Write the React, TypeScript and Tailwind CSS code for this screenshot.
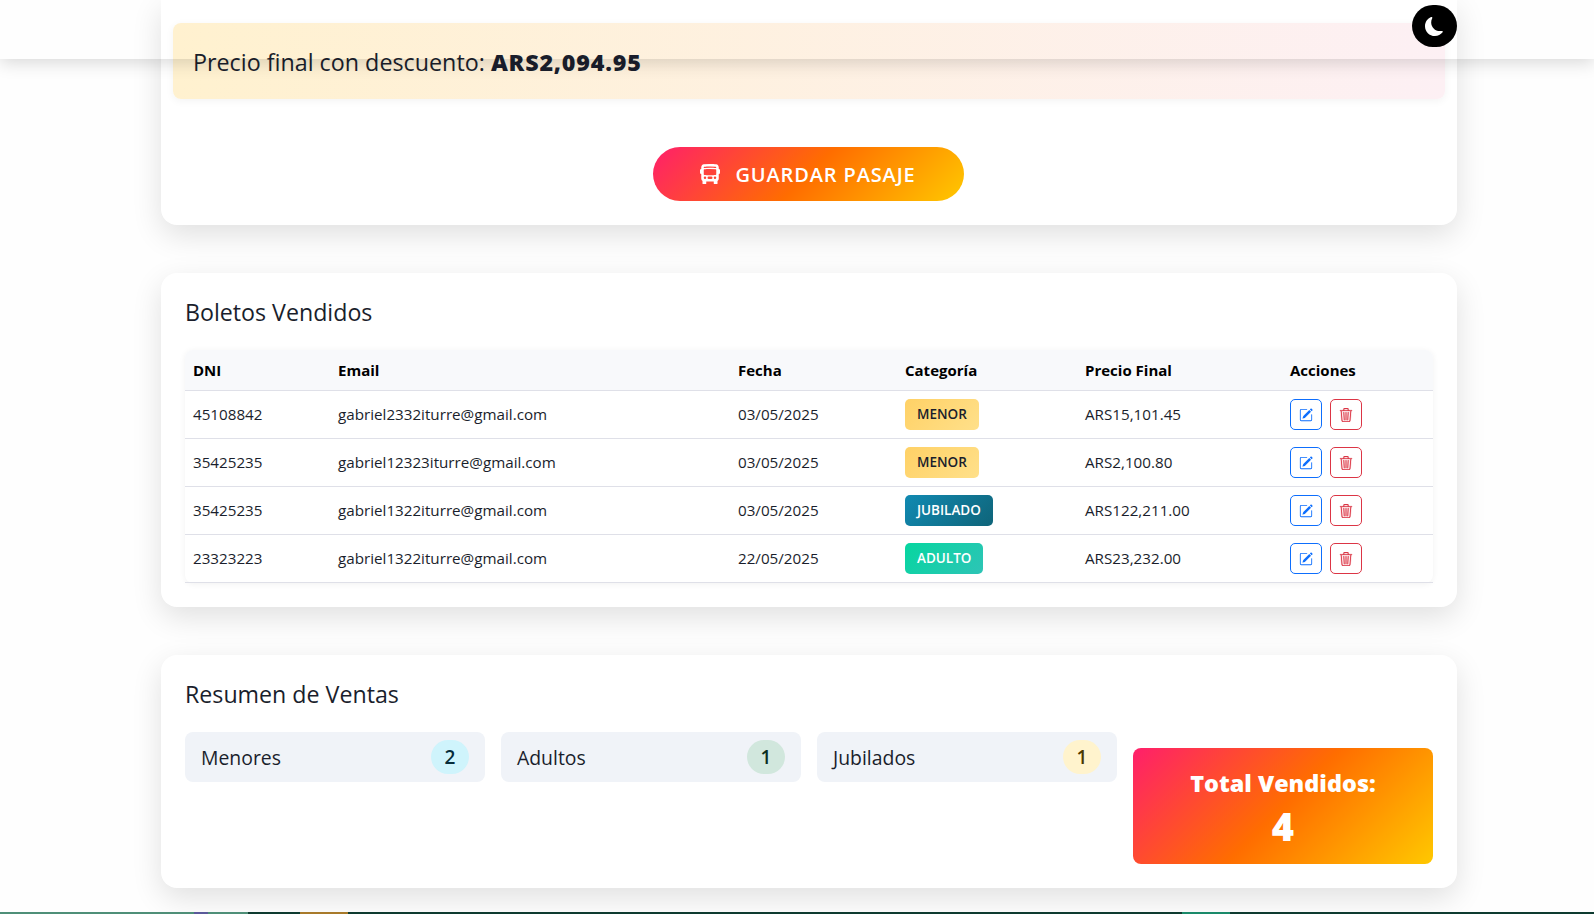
import React from 'react';
import { BsBusFrontFill, BsMoonFill, BsPencilSquare, BsTrash3 } from 'react-icons/bs';

const sans = "font-['Open_Sans','Noto_Sans',sans-serif]";

interface Ticket {
  dni: string;
  email: string;
  fecha: string;
  cat: 'MENOR' | 'JUBILADO' | 'ADULTO';
  precio: string;
}

const tickets: Ticket[] = [
  { dni: '45108842', email: 'gabriel2332iturre@gmail.com', fecha: '03/05/2025', cat: 'MENOR', precio: 'ARS15,101.45' },
  { dni: '35425235', email: 'gabriel12323iturre@gmail.com', fecha: '03/05/2025', cat: 'MENOR', precio: 'ARS2,100.80' },
  { dni: '35425235', email: 'gabriel1322iturre@gmail.com', fecha: '03/05/2025', cat: 'JUBILADO', precio: 'ARS122,211.00' },
  { dni: '23323223', email: 'gabriel1322iturre@gmail.com', fecha: '22/05/2025', cat: 'ADULTO', precio: 'ARS23,232.00' },
];

const badgeClass = {
  MENOR: 'bg-[linear-gradient(135deg,#ffd166,#ffe08a)] text-[#1a1e2c]',
  JUBILADO: 'bg-[linear-gradient(135deg,#118ab2,#0f6479)] text-white',
  ADULTO: 'bg-[linear-gradient(135deg,#06d6a0,#2ec4b6)] text-white',
};

const cols = 'grid grid-cols-[145px_400px_167px_180px_205px_1fr]';

const SummaryItem = ({ label, count, badge }: { label: string; count: number; badge: string }) => (
  <div className="h-[50px] bg-[#f0f3f8] rounded-[8px] flex items-center justify-between px-[16px]">
    <span className="text-[19.4px] pt-[1px] text-[#1a1e2c]">{label}</span>
    <span className={`w-[38px] h-[34px] rounded-full flex items-center justify-center text-[19px] font-semibold ${badge}`}>{count}</span>
  </div>
);

export default function App() {
  return (
    <div className={`relative h-[914px] overflow-hidden bg-[#fefefe] flex flex-col ${sans}`}>
      {/* barra fija de arriba */}
      <div className="absolute top-0 left-0 right-0 h-[59px] shadow-[0_4px_16px_rgba(0,0,0,0.15)] z-10" />
      <button className="absolute z-20 top-[5px] left-[1412px] w-[45px] h-[42px] rounded-full bg-black flex items-center justify-center">
        <BsMoonFill size={19} className="text-white" />
      </button>

      <main className="flex flex-col gap-[48px] ml-[161px] w-[1296px]">
        <section className="h-[225px] bg-white rounded-b-[16px] shadow-[0_10px_30px_rgba(0,0,0,0.12)] pt-[23px] px-[12px]">
          <div className="h-[76px] rounded-[8px] bg-gradient-to-r from-[#fff1cf] to-[#fdf0f4] shadow-[0_2px_8px_rgba(0,0,0,0.05)] flex items-center pl-[20px] pt-[2px] text-[23.3px] text-[#1a1e2c]">
            <span>Precio final con descuento:&nbsp;</span>
            <strong className="font-extrabold tracking-[0.8px]">ARS2,094.95</strong>
          </div>
          <div className="flex justify-center mt-[48px]">
            <button className="-ml-[2px] w-[311px] h-[54px] pt-[2px] rounded-full bg-[linear-gradient(135deg,#ff1f6b,#ff6d00_50%,#ffc800)] text-white flex items-center justify-center gap-[15px] text-[20px] font-semibold tracking-[0.85px]">
              <BsBusFrontFill size={20} className="-mt-[2px]" />
              GUARDAR PASAJE
            </button>
          </div>
        </section>

        <section className="h-[334px] bg-white rounded-[16px] shadow-[0_10px_30px_rgba(0,0,0,0.12)] px-[24px] pt-[23px]">
          <h2 className="text-[23.2px] leading-[32px] text-[#1a1e2c] font-medium">Boletos Vendidos</h2>
          <div className="mt-[22px] rounded-[8px] shadow-[0_1px_6px_rgba(0,0,0,0.06)] text-[15.2px] text-[#1a1e2c]">
            <div className={`${cols} h-[41px] items-center bg-[#f8f9fb] rounded-t-[8px] border-b border-[#dfe0e8] px-[8px] text-[15px] font-bold text-black`}>
              <span>DNI</span>
              <span>Email</span>
              <span>Fecha</span>
              <span>Categoría</span>
              <span>Precio Final</span>
              <span>Acciones</span>
            </div>
            {tickets.map((t, i) => (
              <div key={i} className={`${cols} h-[48px] items-center border-b border-[#dfe0e8] px-[8px]`}>
                <span>{t.dni}</span>
                <span>{t.email}</span>
                <span>{t.fecha}</span>
                <span>
                  <span className={`inline-flex items-center h-[31px] px-[12px] rounded-[5px] text-[13.5px] font-semibold ${badgeClass[t.cat]}`}>{t.cat}</span>
                </span>
                <span>{t.precio}</span>
                <span className="flex gap-[8px]">
                  <button className="w-[31.5px] h-[31px] rounded-[5px] border border-[#0d6efd] flex items-center justify-center text-[#0d6efd]"><BsPencilSquare size={14} /></button>
                  <button className="w-[32px] h-[31px] rounded-[5px] border border-[#dc3545] flex items-center justify-center text-[#dc3545]"><BsTrash3 size={14} stroke="currentColor" strokeWidth={0.3} /></button>
                </span>
              </div>
            ))}
          </div>
        </section>

        <section className="h-[233px] bg-white rounded-[16px] shadow-[0_10px_30px_rgba(0,0,0,0.12)] px-[24px] pt-[23px]">
          <h2 className="text-[23.2px] leading-[32px] text-[#1a1e2c] font-medium">Resumen de Ventas</h2>
          <div className="grid grid-cols-4 gap-[16px] mt-[22px] items-start">
            <SummaryItem label="Menores" count={2} badge="bg-[#cff4fc] text-[#052c3b]" />
            <SummaryItem label="Adultos" count={1} badge="bg-[#d1e7dd] text-[#0a2e1f]" />
            <SummaryItem label="Jubilados" count={1} badge="bg-[#fff3cd] text-[#4d3800]" />
            <div className="mt-[16px] h-[116px] pt-[5px] rounded-[8px] bg-[linear-gradient(135deg,#ff1f6b,#ff6d00_50%,#ffc800)] text-white flex flex-col items-center justify-center">
              <span className="text-[23.4px] font-extrabold">Total Vendidos:</span>
              <span className="text-[38px] leading-[50px] font-extrabold">4</span>
            </div>
          </div>
        </section>
      </main>

      {/* tira del fondo */}
      <div className="absolute bottom-0 left-0 right-0 h-[2px] flex bg-[#0e3b30]">
        <div className="w-[194px] bg-[#4f8f78]" />
        <div className="w-[14px] bg-[#5a5a9a]" />
        <div className="w-[40px] bg-[#4f8f78]" />
        <div className="w-[52px]" />
        <div className="w-[48px] bg-[#a87a2a]" />
        <div className="w-[834px]" />
        <div className="w-[48px] bg-[#1a8a6a]" />
      </div>
    </div>
  );
}
